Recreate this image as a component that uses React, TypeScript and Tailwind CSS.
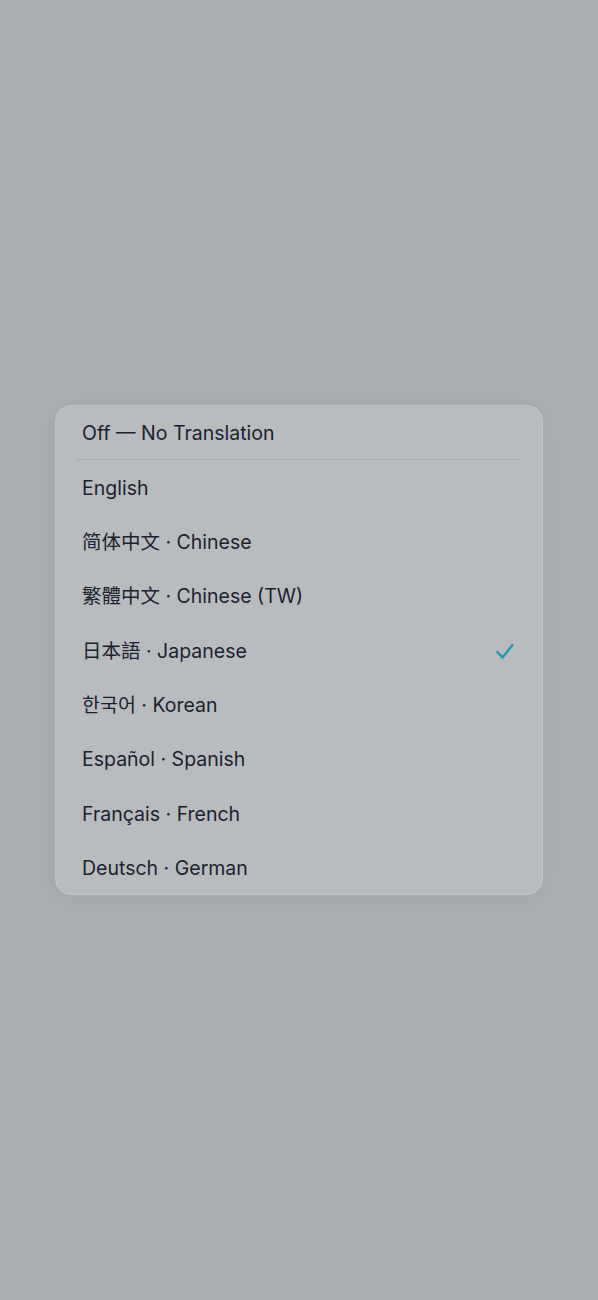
import React from "react";

const items = [
  "English",
  "简体中文 · Chinese",
  "繁體中文 · Chinese (TW)",
  "日本語 · Japanese",
  "한국어 · Korean",
  "Español · Spanish",
  "Français · French",
  "Deutsch · German",
];

export default function App() {
  return (
    <div
      className="min-h-[1300px] w-full bg-[#a8aeb0] flex items-center justify-center"
      style={{ fontFamily: 'Inter, "Noto Sans CJK SC", "Noto Sans CJK KR", sans-serif' }}
    >
      <div className="w-[488px] rounded-[16px] bg-[#b9bcbe] border border-[#c0c3c5] shadow-[0_4px_20px_rgba(0,0,0,0.04)] overflow-hidden">
        <div className="h-[53px] pt-[2px] flex items-center px-[26px] text-[19.5px] text-[#1b2230]">
          Off — No Translation
        </div>
        <div className="mx-[20px] h-px bg-[#a9acaf]" />
        {items.map((t, i) => (
          <div
            key={t}
            className="h-[54.3px] pt-[3px] flex items-center justify-between pl-[26px] pr-[28px] text-[19.5px] text-[#1b2230]"
          >
            <span>{t}</span>
            {i === 3 && (
              <svg width="18" height="17" viewBox="0 0 18 17" fill="none">
                <path d="M1.5 9 L6.5 14.5 L16.5 2" stroke="#1d9ab4" strokeWidth="2.4" strokeLinecap="round" strokeLinejoin="round" />
              </svg>
            )}
          </div>
        ))}
      </div>
    </div>
  );
}
